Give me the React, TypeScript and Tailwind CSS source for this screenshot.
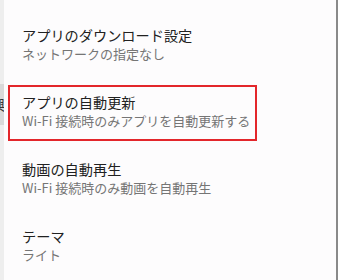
const items = [
  { title: 'アプリのダウンロード設定', sub: 'ネットワークの指定なし' },
  { title: 'アプリの自動更新', sub: 'Wi-Fi 接続時のみアプリを自動更新する', marked: true },
  { title: '動画の自動再生', sub: 'Wi-Fi 接続時のみ動画を自動再生' },
  { title: 'テーマ', sub: 'ライト' },
];

function ItemText({ title, sub }: { title: string; sub: string }) {
  return (
    <>
      <div className="text-[14.2px] leading-[18px] text-[#212121]">{title}</div>
      <div className="mt-[2px] text-[13px] leading-[16px] text-[#757575]">{sub}</div>
    </>
  );
}

export default function App() {
  return (
    <div className="flex h-[280px] w-[340px] overflow-hidden bg-[#fdfcfd] font-['Noto_Sans_CJK_JP','Noto_Sans',sans-serif]">
      {/* edge of the panel behind */}
      <div className="w-[4px] shrink-0 bg-[#eeeeee] pt-[84px]">
        <div className="h-[41px] overflow-hidden bg-[#d9d9d9] pt-[12px]">
          <span className="-ml-[9px] block text-[14px] leading-[16px] text-[#333]">興</span>
        </div>
      </div>

      <div className="flex-1">
        {items.map((item) =>
          item.marked ? (
            <div key={item.title} className="h-[67px] pt-[8px]">
              <div className="ml-[4px] h-[56px] w-[249px] border-2 border-[#e3262b] pl-[12px] pt-[6px]">
                <ItemText title={item.title} sub={item.sub} />
              </div>
            </div>
          ) : (
            <div key={item.title} className="h-[67px] px-[18px] pt-[16px] first:pt-[26px] first:h-[77px]">
              <ItemText title={item.title} sub={item.sub} />
            </div>
          ),
        )}
      </div>

      <div className="w-[2px] shrink-0 bg-[#8a8a8a]" />
      <div className="w-[2px] shrink-0 bg-white" />
    </div>
  );
}
